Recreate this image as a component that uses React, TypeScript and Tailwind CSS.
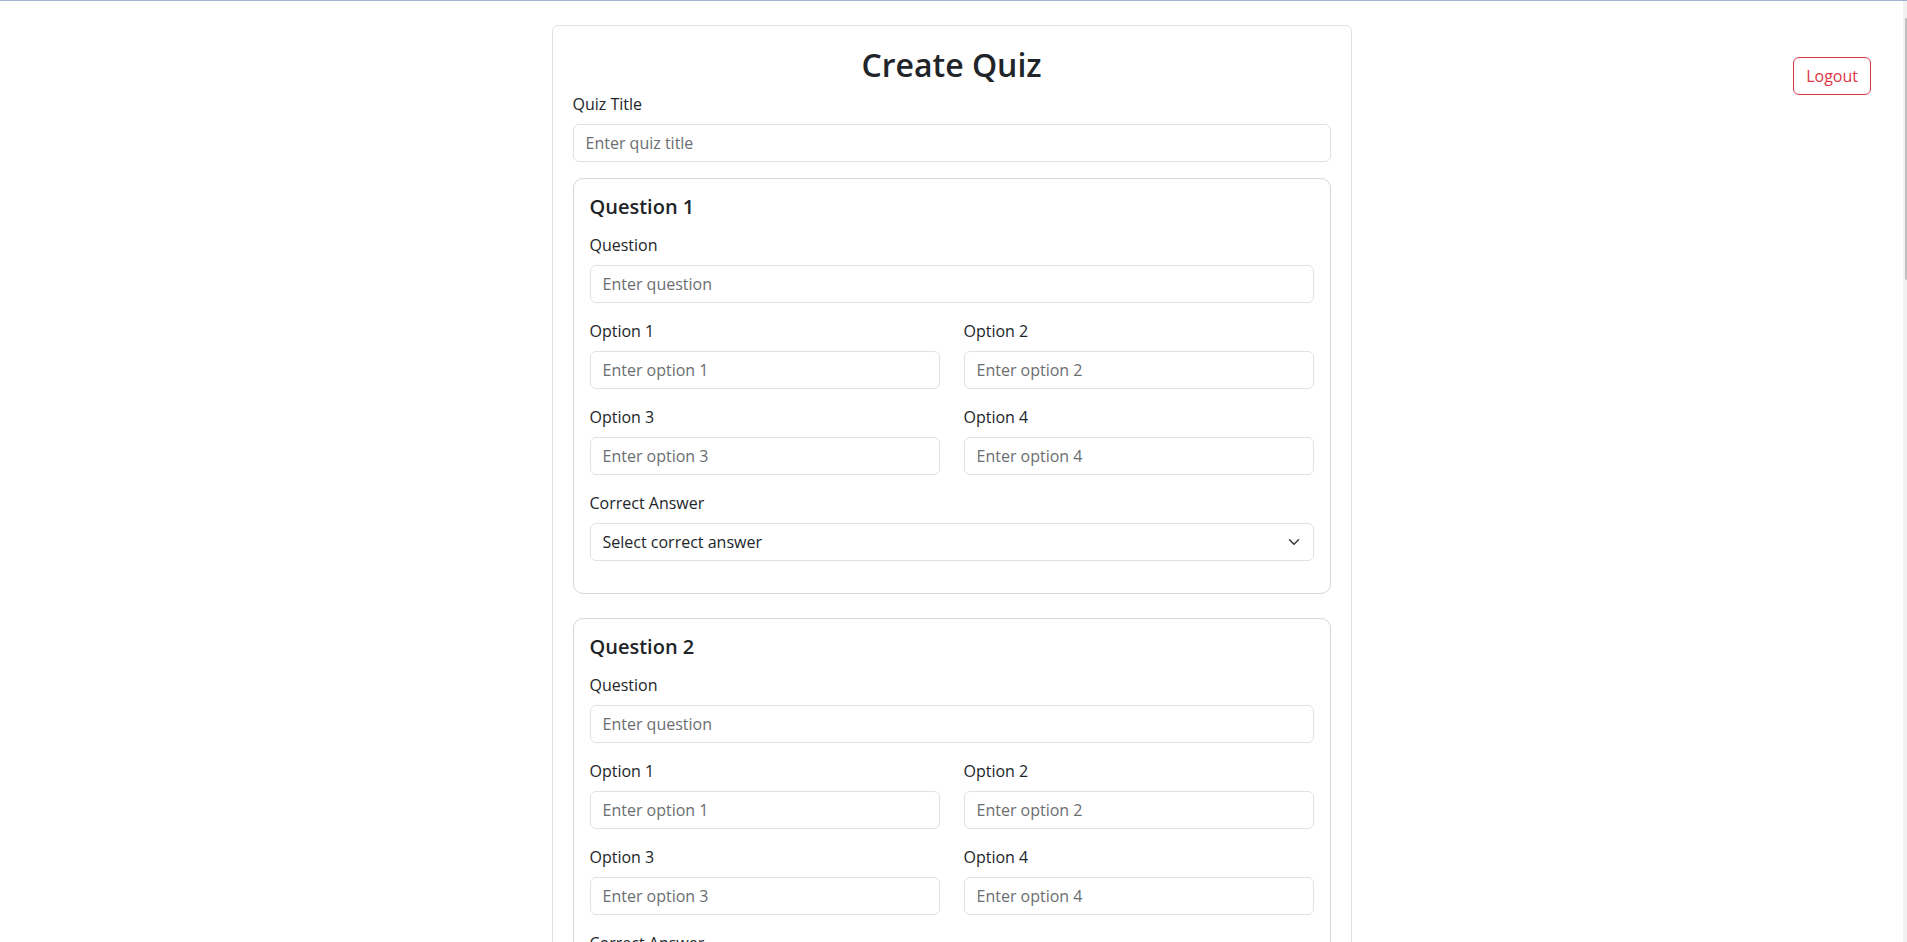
import React from 'react';

const QuestionCard: React.FC<{ index: number }> = ({ index }) => {
    const options = [1, 2, 3, 4];

    return (
        <div className="border border-[#d6d8db] rounded-[10px] p-4 mb-6">
            <h5 className="text-xl leading-6 font-semibold mb-3.5">Question {index}</h5>

            <div className="mb-4">
                <label className="block leading-6 mb-2">Question</label>
                <input
                    className="w-full h-[38px] border border-[#dee2e6] rounded-md px-3 outline-none placeholder:text-[#6b6e71]"
                    placeholder="Enter question"
                />
            </div>

            <div className="grid grid-cols-2 gap-x-6">
                {options.map((n) => (
                    <div key={n} className="mb-4">
                        <label className="block leading-6 mb-2">Option {n}</label>
                        <input
                            className="w-full h-[38px] border border-[#dee2e6] rounded-md px-3 outline-none placeholder:text-[#6b6e71]"
                            placeholder={`Enter option ${n}`}
                        />
                    </div>
                ))}
            </div>

            <div className="mb-4">
                <label className="block leading-6 mb-2">Correct Answer</label>
                <div className="relative">
                    <select className="w-full h-[38px] border border-[#dee2e6] rounded-md pl-3 pr-9 appearance-none bg-white text-[#212529] outline-none">
                        <option>Select correct answer</option>
                        {options.map((n) => (
                            <option key={n}>Option {n}</option>
                        ))}
                    </select>
                    {/* chevron */}
                    <svg
                        className="absolute right-[14px] top-1/2 -translate-y-1/2 pointer-events-none"
                        width="12"
                        height="12"
                        viewBox="0 0 16 16"
                        fill="none"
                    >
                        <path d="m2 5 6 6 6-6" stroke="#343a40" strokeWidth="2" strokeLinecap="round" strokeLinejoin="round" />
                    </svg>
                </div>
            </div>
        </div>
    );
};

const App: React.FC = () => {
    return (
        <div className="h-screen flex flex-col overflow-hidden bg-white text-[#212529] text-base font-['Open_Sans',sans-serif]">
            <div className="h-px bg-[#a3b1cc] shrink-0"></div>

            <div className="flex flex-1 min-h-0">
                <div className="flex-1"></div>

                {/* Main form */}
                <main className="w-[800px] shrink-0 pt-6">
                    <div className="border border-[#dee2e6] rounded-md px-5 pt-5">
                        <h2 className="text-[32px] leading-[1.2] font-semibold text-center mb-2">Create Quiz</h2>

                        <div className="mb-4">
                            <label className="block leading-6 mb-2">Quiz Title</label>
                            <input
                                className="w-full h-[38px] border border-[#dee2e6] rounded-md px-3 outline-none placeholder:text-[#6b6e71]"
                                placeholder="Enter quiz title"
                            />
                        </div>

                        {[1, 2, 3].map((i) => (
                            <QuestionCard key={i} index={i} />
                        ))}
                    </div>
                </main>

                {/* Logout */}
                <div className="flex-1">
                    <div className="flex justify-end pt-14 pr-8">
                        <button className="px-3 py-1.5 leading-6 border border-[#dc3545] text-[#dc3545] rounded-md">
                            Logout
                        </button>
                    </div>
                </div>

                {/* Scrollbar */}
                <div className="w-[4px] shrink-0 bg-[#f1f1f1] pt-[17px] flex justify-end">
                    <div className="w-[2px] h-[262px] bg-[#c1c1c1] rounded-full"></div>
                </div>
            </div>
        </div>
    );
};

export default App;
